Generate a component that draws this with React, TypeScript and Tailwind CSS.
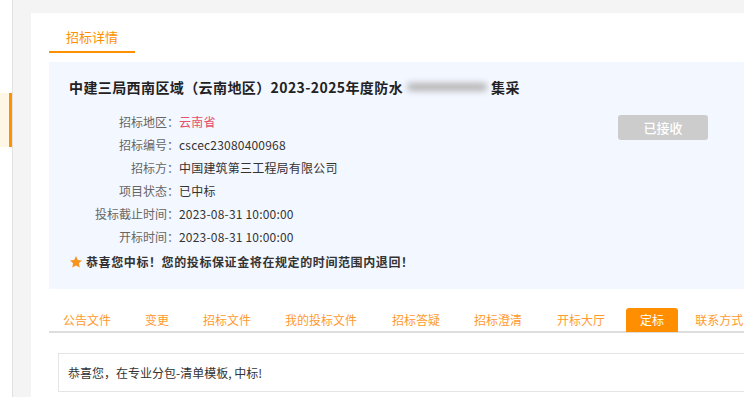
import React from 'react';

const rows = [
  { label: '招标地区：', value: '云南省', red: true },
  { label: '招标编号：', value: 'cscec23080400968' },
  { label: '招标方：', value: '中国建筑第三工程局有限公司' },
  { label: '项目状态：', value: '已中标' },
  { label: '投标截止时间：', value: '2023-08-31 10:00:00' },
  { label: '开标时间：', value: '2023-08-31 10:00:00' },
];

const tabs = [
  { name: '公告文件', cls: 'pl-[14px] pr-[17px]' },
  { name: '变更', cls: 'px-[17px]' },
  { name: '招标文件', cls: 'px-[17px]' },
  { name: '我的投标文件', cls: 'pl-[17px] pr-[18px]' },
  { name: '招标答疑', cls: 'px-[17px]' },
  { name: '招标澄清', cls: 'pl-[17px] pr-[18px]' },
  { name: '开标大厅', cls: 'pl-[17px] pr-[21px]' },
  { name: '定标', cls: 'px-[14px]', active: true },
  { name: '联系方式', cls: 'px-[17px]' },
];

function StarIcon() {
  return (
    <svg width="14" height="14" viewBox="0 0 24 24" className="shrink-0">
      <path
        d="M12 1.8l3.1 6.6 7.2.9-5.3 5 1.4 7.1L12 17.9l-6.4 3.5 1.4-7.1-5.3-5 7.2-.9z"
        fill="#f7941d"
      />
    </svg>
  );
}

export default function App() {
  return (
    <div className="flex w-[744px] h-[397px] overflow-hidden bg-[#f4f4f4] font-['Noto_Sans_CJK_SC',sans-serif] text-[12px] text-[#333]">
      {/* sidebar sliver */}
      <div className="w-[13px] shrink-0 bg-white border-r border-[#e2e2e2] pt-[93px]">
        <div className="flex h-[54px]">
          <div className="w-[9px] bg-[#fff7e6]" />
          <div className="w-[3px] bg-[#ff9000]" />
        </div>
      </div>

      <div className="flex-1 pl-[18px] pt-[13px]">
        <div className="w-[760px] h-full bg-white pl-[18px]">
          {/* header tab */}
          <div className="w-[86px] border-b-2 border-[#ff9000] pt-[15px] pb-[6px] text-center text-[13px] leading-[17px] text-[#ff9000]">
            招标详情
          </div>

          {/* info panel */}
          <div className="mt-[9px] bg-[#f3f7ff] pl-[20px] pt-[15px] pb-[17px]">
            <div className="flex items-center text-[14px] font-bold leading-[20px] tracking-[0.4px] text-[#222]">
              <span>中建三局西南区域（云南地区）2023-2025年度防水</span>
              <span className="mx-[4px] inline-block h-[8px] w-[80px] rounded-full bg-[#b5b5b5] blur-[3px]" />
              <span>集采</span>
            </div>

            <div className="mt-[13px] flex">
              <div className="w-[549px]">
                {rows.map((r) => (
                  <div key={r.label} className="flex leading-[23px]">
                    <div className="w-[110px] text-right text-[#666]">{r.label}</div>
                    <div className={r.red ? 'text-[#e5506a] tracking-[0.2px]' : 'text-[#333] tracking-[0.2px]'}>
                      {r.value}
                    </div>
                  </div>
                ))}
              </div>
              <div className="mt-[5px]">
                <div className="flex h-[25px] w-[90px] items-center justify-center rounded-[3px] bg-[#cccccc] text-[13px] font-medium text-white">
                  已接收
                </div>
              </div>
            </div>

            <div className="mt-[4px] flex items-center gap-[3px] font-bold leading-[20px] tracking-[0.6px] text-[#333]">
              <StarIcon />
              <span>恭喜您中标！您的投标保证金将在规定的时间范围内退回！</span>
            </div>
          </div>

          {/* tabs */}
          <div className="mt-[19px] flex border-b-2 border-[#dddddd]">
            {tabs.map((t) => (
              <div
                key={t.name}
                className={
                  t.active
                    ? `${t.cls} -mb-[1px] h-[24px] rounded-t-[3px] bg-[#ff8f00] leading-[23px] text-white`
                    : `${t.cls} h-[23px] leading-[23px] text-[#ff9a2e]`
                }
              >
                {t.name}
              </div>
            ))}
          </div>

          {/* result box */}
          <div className="ml-[9px] mt-[20px] border border-[#e5e5e5] pl-[9px] leading-[37px] text-[#333]">
            恭喜您，在专业分包-清单模板, 中标!
          </div>
        </div>
      </div>
    </div>
  );
}
